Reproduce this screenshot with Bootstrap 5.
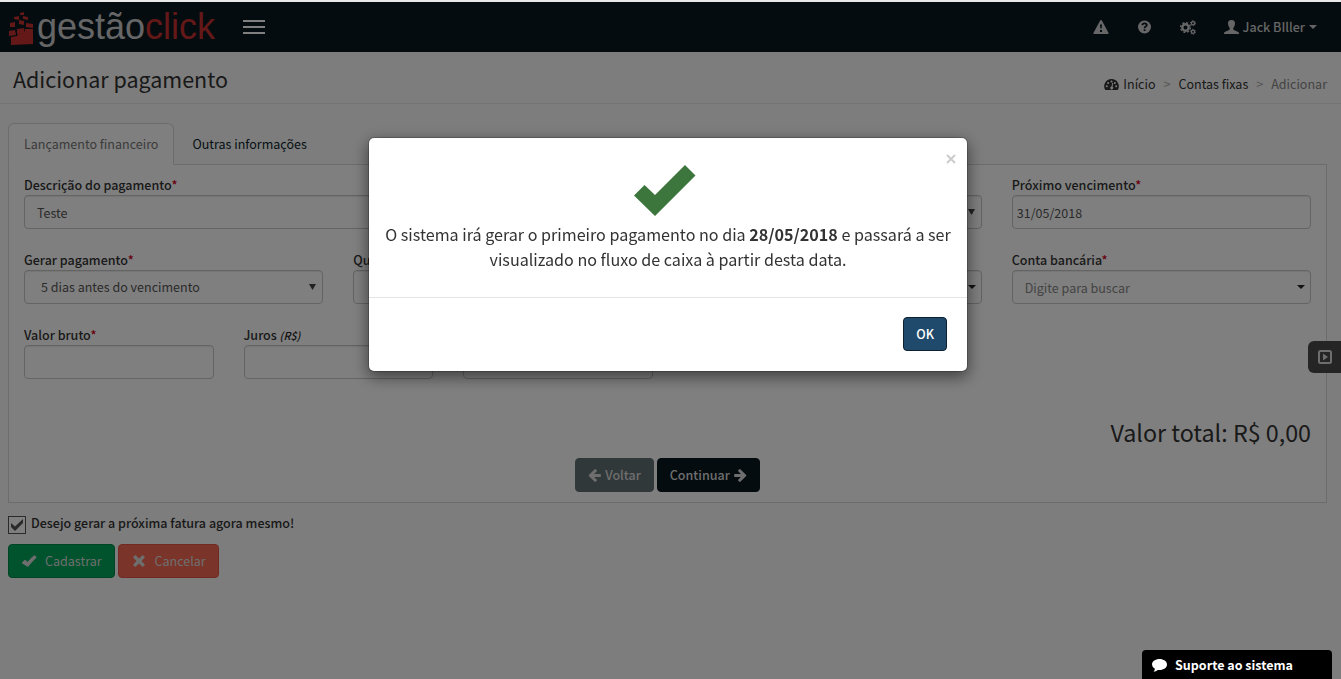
<!DOCTYPE html>
<html lang="pt-BR">
<head>
<meta charset="utf-8">
<meta name="viewport" content="width=device-width, initial-scale=1">
<title>Adicionar pagamento</title>
<link href="https://cdn.jsdelivr.net/npm/bootstrap@5.3.0/dist/css/bootstrap.min.css" rel="stylesheet">
<style>
  :root { --navy: #0a1820; --line: #d8d8d8; --field: #c8c8c8; }
  body {
    font-family: "Source Sans Pro", "Noto Sans CJK JP", sans-serif;
    font-size: 14px; font-size-adjust: .486; line-height: 20px;
    color: #333; background: #fafafa; border-top: 2px solid #e8e8e8; min-height: 100vh;
  }
  button, input, select { font-size-adjust: inherit; }
  svg { fill: currentColor; flex: none; }
  a { text-decoration: none; }
  .topbar { background: var(--navy); height: 50px; padding: 0 24px 0 9px; }
  .topbar a, .topbar button { color: #ccc; }
  .brand-name { font: 36px/50px "Liberation Sans", Arial, sans-serif; font-size-adjust: none; margin-left: 2px; }
  .brand-name b { font-weight: 400; color: #c9302f; }
  .brand-mark { fill: #c9302f; margin-top: 4px; }
  .burger { width: 22px; margin-left: 28px; }
  .burger span { height: 2px; background: #fff; }
  .user-menu { font-weight: 500; }
  .caret { width: 0; height: 0; border: 4px solid transparent; border-top-color: currentColor; border-bottom: 0; }
  .page-head { height: 52px; padding: 0 14px 0 13px; border-bottom: 1px solid #e9e9e9; }
  .page-head h1 { font-size: 24px; line-height: 30px; padding-top: 2px; }
  .crumbs { padding-top: 13px; --bs-breadcrumb-divider: ">"; --bs-breadcrumb-divider-color: #aaa; }
  .crumbs a { color: #333; }
  .crumbs .active { color: #888; }
  .page-body { padding: 19px 14px 0 8px; }
  .nav-tabs { --bs-nav-tabs-border-color: var(--line); border-bottom: 0; }
  .nav-tabs .nav-link { padding: 10px 15px; color: #0c1f2b; margin-right: 2px; }
  .nav-tabs .nav-link.active { color: #777; border-color: var(--line) var(--line) #fff; background: #fff; }
  .pane { background: #fff; border: 1px solid var(--line); padding: 10px 15px; }
  .row { --bs-gutter-x: 30px; }
  .pane .row > div { margin-bottom: 21px; }
  .pane label, .keep label { font-weight: 500; display: block; }
  .pane label { height: 20px; }
  .pane label i { color: #222; font-size: 12px; }
  .req { color: #d00018; }
  .form-control, .form-select {
    height: 34px; font-size: 14px; line-height: 20px; padding: 6px 12px; color: #555;
    border: 1px solid var(--field); border-radius: 4px; background-color: #fff; box-shadow: inset 0 1px 1px rgba(0,0,0,.08);
  }
  .form-select { padding-left: 16px; background-size: 7px 8px; background-position: right 6px center;
    background-image: url("data:image/svg+xml,%3Csvg xmlns='http://www.w3.org/2000/svg' viewBox='0 0 7 8'%3E%3Cpath d='M0 1h7L3.5 7z' fill='%23444'/%3E%3C/svg%3E"); }
  .form-control::placeholder { color: #888; }
  .combo { background: no-repeat right 5px center / 8px 4px url("data:image/svg+xml,%3Csvg xmlns='http://www.w3.org/2000/svg' viewBox='0 0 8 4'%3E%3Cpath d='M0 0h8L4 4z' fill='%23222'/%3E%3C/svg%3E"); }
  .date-field { padding-left: 4px; }
  .total { font-size: 26px; line-height: 30px; margin: 17px 0 11px; }
  .actions { gap: 3px; }
  .btn { --bs-btn-padding-y: 6px; --bs-btn-padding-x: 12px; --bs-btn-font-size: 14px; --bs-btn-line-height: 20px; --bs-btn-border-radius: 4px;
    display: inline-flex; align-items: center; font-weight: 500; }
  .btn-back { --bs-btn-bg: #637074; --bs-btn-border-color: #637074; --bs-btn-color: #ddd; }
  .btn-next { --bs-btn-bg: var(--navy); --bs-btn-border-color: var(--navy); --bs-btn-color: #ddd; }
  .btn-save { --bs-btn-bg: #00a65a; --bs-btn-border-color: #008d4c; --bs-btn-color: #ddd; font-weight: 400; }
  .btn-drop { --bs-btn-bg: #f56954; --bs-btn-border-color: #e25543; --bs-btn-color: #ddd; font-weight: 400; }
  .btn-ok { --bs-btn-bg: #204a6b; --bs-btn-border-color: #0d2131; --bs-btn-color: #fff; }
  .keep { padding: 10px 0; gap: 5px; }
  .keep input { appearance: none; width: 18px; height: 18px; margin: 3px 0 0; border: 1px solid #555; 
    background: #fff center / 14px 14px no-repeat url("data:image/svg+xml,%3Csvg xmlns='http://www.w3.org/2000/svg' viewBox='0 0 14 14'%3E%3Cpath d='M1 5v4l4 4 8-8V1L5 8.500z' fill='%23555'/%3E%3C/svg%3E"); }
  .side-tab { top: 341px; width: 33px; height: 32px; background: #4a4a4a; color: #ddd; border: 0; border-radius: 6px 0 0 6px; z-index: 5; }
  .modal-backdrop { top: 2px; }
  .modal { padding-right: 5px; }
  .modal-dialog { margin-top: 137px; max-width: 600px; }
  .modal-content { border: 1px solid rgba(0,0,0,.2); border-radius: 6px; box-shadow: 0 5px 15px rgba(0,0,0,.5); color: #333; background-clip: padding-box; }
  .modal-body { padding: 27px 15px 25px; font-size: 18px; line-height: 25px; }
  .modal-body p { margin: 6px 0 0; }
  .check-mark { margin: 0 auto; padding-right: 7px; width: 69px; }
  .modal-footer { padding: 19px 20px 20px; border-color: #e5e5e5; }
  .modal-footer > * { margin: 0; }
  .dismiss { top: 16px; right: 11px; width: 10px; height: 10px; color: #ccc; }
  .support { right: 9px; width: 190px; height: 29px; background: #000; color: #fff; border: 0; border-radius: 4px 4px 0 0; padding: 0 10px; z-index: 1060; font-weight: 700; }
</style>
</head>
<body>
<nav class="topbar d-flex align-items-center">
  <a href="#" class="d-flex align-items-center" aria-label="gestãoclick">
    <svg class="brand-mark" width="26" height="34" viewBox="0 0 26 34"><path d="M11 1l4-1 0 3-4 0zM5 5l5 -1 0 4-5-1zM14 4l5 1v3l-5-1zM1 11l5-1v5H1zM10 8l5 1v4l-5-1zM17 11l7 1v4l-7-1zM0 19l6-1 1 5-7 1zM8 17l7-1v5l-7 1zM2 25l6-1 1-2 6-1 1-4 8 0V32L2 33z"/></svg>
    <span class="brand-name">gestão<b>click</b></span>
  </a>
  <button class="burger btn p-0 border-0 d-flex flex-column gap-1 align-items-stretch" aria-label="Menu"><span></span><span></span><span></span></button>
  <div class="ms-auto d-flex align-items-center">
    <a href="#" class="me-4 pe-1 d-flex" aria-label="Alertas"><svg width="16" height="14" viewBox="0 0 16 14"><path fill-rule="evenodd" d="M8 0q.6 0 1 .8L15.600 13q.2.900-.6 1H1q-.8-.1-.6-1L7 .8Q7.400 0 8 0zM7 4.500l.4 4h1.200l.4-4zM7 10v2h2v-2z"/></svg></a>
    <a href="#" class="me-4 pe-1 d-flex" aria-label="Ajuda"><svg width="15" height="14" viewBox="0 0 15 14"><circle cx="7.500" cy="7" r="6.500"/><path d="M5.300 5.200Q5.500 3.300 7.600 3.300T9.800 5.100Q9.800 6 8.700 6.600T7.600 8.200" fill="none" stroke="#09171f" stroke-width="1.700"/><path d="M6.700 9.300h1.800v1.700H6.700z" fill="#09171f"/></svg></a>
    <a href="#" class="me-4 pe-1 d-flex" aria-label="Configurações"><svg width="16" height="15" viewBox="0 0 16 15"><g fill="none" stroke="currentColor"><circle cx="5.500" cy="7.500" r="3.200" stroke-width="2.400"/><circle cx="5.500" cy="7.500" r="4.900" stroke-width="1.400" stroke-dasharray="2 1.850"/><circle cx="13" cy="3.200" r="1.600" stroke-width="1.300"/><circle cx="13" cy="3.200" r="2.500" stroke-width="1" stroke-dasharray="1.300 1.320"/><circle cx="13" cy="11.800" r="1.600" stroke-width="1.300"/><circle cx="13" cy="11.800" r="2.500" stroke-width="1" stroke-dasharray="1.300 1.320"/></g></svg></a>
    <a href="#" class="user-menu d-flex align-items-center"><svg width="15" height="14" viewBox="0 0 15 14"><path d="M7.500 0q3.800.2 3.500 3.800-.2 3-1.700 4.200v1.300q.3.800 1.700 1.200 3.500 1.200 4 2.200V14H0v-1.300q.5-1 4-2.200Q5.400 10 5.700 9.300V8Q4.200 6.800 4 3.800 3.700.2 7.500 0z"/></svg><span class="ms-1 me-1">Jack BIller</span><span class="caret"></span></a>
  </div>
</nav>

<header class="page-head d-flex justify-content-between align-items-center">
  <h1 class="m-0 fw-normal">Adicionar pagamento</h1>
  <ol class="crumbs breadcrumb m-0">
    <li class="breadcrumb-item d-flex align-items-center"><a href="#" class="d-flex align-items-center gap-1"><svg width="15" height="13" viewBox="0 0 15 13"><path d="M7.500 1a7.200 7.200 0 0 1 6.200 11H1.300A7.200 7.200 0 0 1 7.500 1z"/><g fill="#fafafa"><circle cx="2.800" cy="8.300" r="1"/><circle cx="4.100" cy="5" r="1"/><circle cx="7.500" cy="3.500" r="1"/><circle cx="10.900" cy="5" r="1"/><circle cx="12.200" cy="8.300" r="1"/><path d="M8.300 4.800l1 .2-.8 3.600a1.500 1.500 0 1 1-1-.2z"/></g></svg>Início</a></li>
    <li class="breadcrumb-item"><a href="#">Contas fixas</a></li>
    <li class="breadcrumb-item active">Adicionar</li>
  </ol>
</header>

<main class="page-body">
  <ul class="nav nav-tabs">
    <li class="nav-item"><a class="nav-link active" href="#">Lançamento financeiro</a></li>
    <li class="nav-item"><a class="nav-link" href="#">Outras informações</a></li>
  </ul>
  <section class="pane">
    <div class="row">
      <div class="col-6"><label for="desc">Descrição do pagamento<span class="req">*</span></label><input id="desc" class="form-control" value="Teste"></div>
      <div class="col-3"><label for="freq">&nbsp;</label><select id="freq" class="form-select" aria-label="Recorrência"><option></option></select></div>
      <div class="col-3"><label for="due">Próximo vencimento<span class="req">*</span></label><input id="due" class="form-control date-field" value="31/05/2018"></div>
      <div class="col-3"><label for="when">Gerar pagamento<span class="req">*</span></label><select id="when" class="form-select"><option>5 dias antes do vencimento</option></select></div>
      <div class="col-3"><label for="qty">Quantidade</label><input id="qty" class="form-control"></div>
      <div class="col-3"><label for="plan">&nbsp;</label><input id="plan" class="form-control combo" aria-label="Plano de contas"></div>
      <div class="col-3"><label for="bank">Conta bancária<span class="req">*</span></label><input id="bank" class="form-control combo" placeholder="Digite para buscar"></div>
      <div class="col-2"><label for="gross">Valor bruto<span class="req">*</span></label><input id="gross" class="form-control"></div>
      <div class="col-2"><label for="interest">Juros <i>(R$)</i></label><input id="interest" class="form-control"></div>
      <div class="col-2"><label for="discount">&nbsp;</label><input id="discount" class="form-control" aria-label="Desconto"></div>
    </div>
    <div class="total text-end">Valor total: R$ 0,00</div>
    <div class="actions d-flex justify-content-center">
      <button class="btn btn-back gap-1"><svg width="13" height="13" viewBox="100 180 1580 1560"><path id="arr" d="M1664 896v128q0 53-32.500 90.500t-84.500 37.500h-704l293 294q38 36 38 90t-38 90l-75 76q-37 37-90 37-52 0-91-37l-651-652q-37-37-37-90 0-52 37-91l651-650q38-38 91-38 52 0 90 38l75 74q38 38 38 91t-38 91l-293 293h704q52 0 84.500 37.500t32.500 90.500z"/></svg>Voltar</button>
      <button class="btn btn-next gap-1">Continuar<svg width="13" height="13" viewBox="100 180 1580 1560"><use href="#arr" transform="matrix(-1 0 0 1 1780 0)"/></svg></button>
    </div>
  </section>
  <div class="keep d-flex"><input type="checkbox" id="now" checked><label for="now">Desejo gerar a próxima fatura agora mesmo!</label></div>
  <div class="actions d-flex">
    <button class="btn btn-save gap-2"><svg width="16" height="14" viewBox="0 0 16 14"><path d="M1 8.500L3.500 6q.5-.4 1 0L6.500 8Q9.500 4 13 1.500q.6-.4 1 0L15.300 3q.3.500-.1.900Q10.500 8 7.400 12.500q-.6.600-1.200 0L1 9.300q-.3-.4 0-.8z"/></svg>Cadastrar</button>
    <button class="btn btn-drop gap-2"><svg width="16" height="14" viewBox="0 0 16 14"><path d="M4.300 1L8 4.500 11.700 1 14 3.300 10.500 7 14 10.700 11.700 13 8 9.500 4.300 13 2 10.700 5.500 7 2 3.300z"/></svg>Cancelar</button>
  </div>
</main>
<button class="side-tab position-fixed end-0 d-flex align-items-center ps-2" aria-label="Vídeo"><svg width="18" height="16" viewBox="0 0 18 16"><rect x="3" y="2" width="12" height="12" rx="1.500" fill="none" stroke="currentColor" stroke-width="2"/><path d="M7 4.500L12 8l-5 3.500z"/></svg></button>

<div class="modal-backdrop show"></div>
<div class="modal show d-block" tabindex="-1" role="dialog" aria-modal="true">
  <div class="modal-dialog">
    <div class="modal-content">
      <div class="modal-body text-center">
        <button class="dismiss btn p-0 border-0 position-absolute" aria-label="Fechar"><svg width="10" height="10" viewBox="0 0 10 10"><path d="M1 1l8 8M9 1L1 9" stroke="currentColor" stroke-width="2"/></svg></button>
        <svg class="check-mark d-block" height="51" viewBox="0 0 62 51"><path fill="#3c763d" d="M0 30.500L10.500 20 21 30 51 0 61.500 10.500 21 51z"/></svg>
        <p>O sistema irá gerar o primeiro pagamento no dia <strong>28/05/2018</strong> e passará a ser visualizado no fluxo de caixa à partir desta data.</p>
      </div>
      <div class="modal-footer"><button class="btn btn-ok">OK</button></div>
    </div>
  </div>
</div>
<button class="support position-fixed bottom-0 d-flex align-items-center gap-2"><svg width="15" height="14" viewBox="0 0 15 14"><path d="M7.500 1C11.600 1 15 3.300 15 6.500S11.600 12 7.500 12q-.8 0-1.600-.1Q4 13.500 1.500 13.800q1.200-1.200 1.400-3Q0 9.200 0 6.500C0 3.300 3.400 1 7.500 1z"/></svg>Suporte ao sistema</button>
<script src="https://cdn.jsdelivr.net/npm/bootstrap@5.3.0/dist/js/bootstrap.bundle.min.js"></script>
</body>
</html>
